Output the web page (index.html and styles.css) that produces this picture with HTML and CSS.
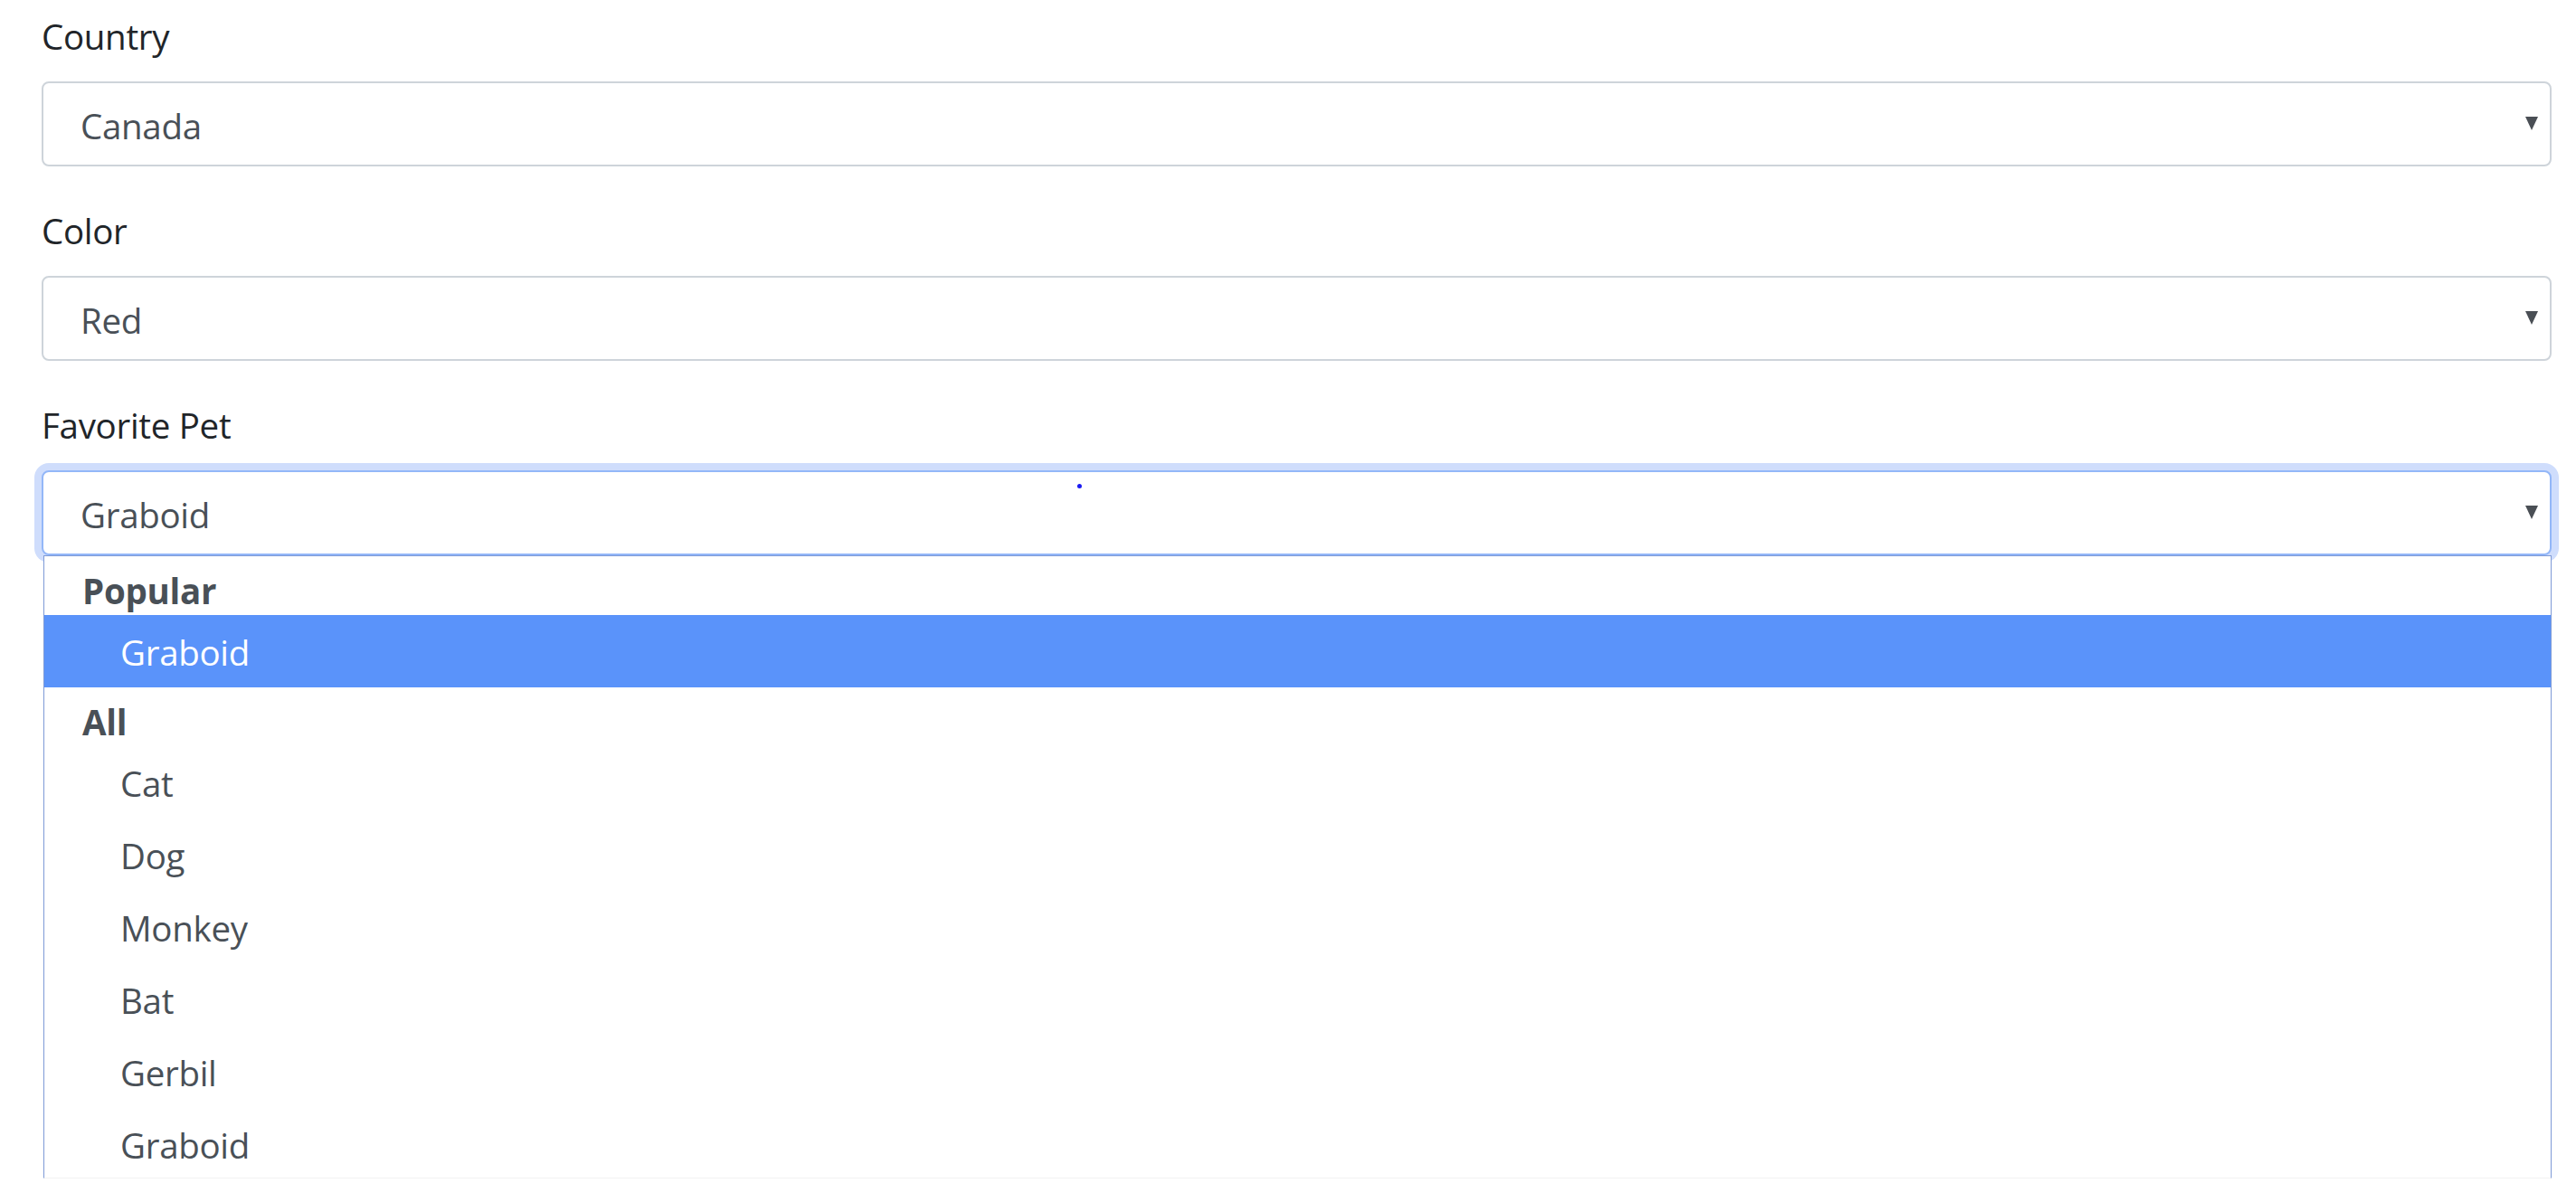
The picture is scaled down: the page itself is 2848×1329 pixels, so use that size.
FILE: index.html
```html
<!DOCTYPE html>
<html lang="en">
<head>
  <meta charset="UTF-8" />
  <title>Select demo</title>
  <link rel="stylesheet" href="styles.css">
</head>
<body>
  <div class="container">
    <div class="form-group">
      <label>Country</label>
      <div class="select">
        <span class="select-value">Canada</span>
        <span class="caret"></span>
      </div>
    </div>

    <div class="form-group">
      <label>Color</label>
      <div class="select">
        <span class="select-value">Red</span>
        <span class="caret"></span>
      </div>
    </div>

    <div class="form-group">
      <label>Favorite Pet</label>
      <div class="select-wrap">
        <div class="select is-focused">
          <span class="select-value">Graboid</span>
          <span class="caret"></span>
          <span class="cursor-dot"></span>
        </div>
        <ul class="dropdown">
          <li class="group-label">Popular</li>
          <li class="option is-active">Graboid</li>
          <li class="group-label">All</li>
          <li class="option">Cat</li>
          <li class="option">Dog</li>
          <li class="option">Monkey</li>
          <li class="option">Bat</li>
          <li class="option">Gerbil</li>
          <li class="option">Graboid</li>
        </ul>
      </div>
    </div>
  </div>
</body>
</html>
```

FILE: styles.css
```css
* {
  box-sizing: border-box;
}
html, body {
  min-height: 100vh;
}
body {
  margin: 0;
  font-family: "Segoe UI", "Open Sans", sans-serif;
  font-size: 38.5px;
  letter-spacing: -0.3px;
  line-height: 60px;
  color: #212529;
  background: #fff;
}
.container {
  padding: 10px 27px 0 46px;
}
.form-group {
  margin-bottom: 41px;
}
label {
  display: block;
  margin-bottom: 20px;
}
.select-wrap {
  position: relative;
}
.select {
  position: relative;
  display: flex;
  align-items: center;
  justify-content: space-between;
  height: 94px;
  padding: 4px 13px 0 41px;
  border: 2px solid #ced4da;
  border-radius: 8px;
  color: #495057;
  background: #fff;
}
.select.is-focused {
  border-color: #93b7f8;
  box-shadow: 0 0 0 8px rgb(207, 221, 252);
}
.caret {
  width: 0;
  height: 0;
  border-left: 7.5px solid transparent;
  border-right: 7.5px solid transparent;
  border-top: 15px solid #4a4f55;
  margin-top: -6px;
}
.cursor-dot {
  position: absolute;
  left: 1143px;
  top: 13px;
  width: 5px;
  height: 5px;
  border-radius: 50%;
  background: #1a1af2;
}
.dropdown {
  position: absolute;
  top: 100%;
  left: 2px;
  right: 0;
  height: 689px;
  margin: 0;
  padding: 0;
  list-style: none;
  overflow: hidden;
  background: #fff;
  border: 1px solid #7e9ad6;
  border-bottom-color: #f3f3f3;
  color: #495057;
}
.group-label {
  height: 65px;
  padding: 12px 0 0 42px;
  line-height: 53px;
  font-weight: 700;
}
.option {
  height: 80px;
  padding: 2px 0 0 84px;
  line-height: 78px;
}
.option.is-active {
  background: #5a93fa;
  color: #fff;
}
```
